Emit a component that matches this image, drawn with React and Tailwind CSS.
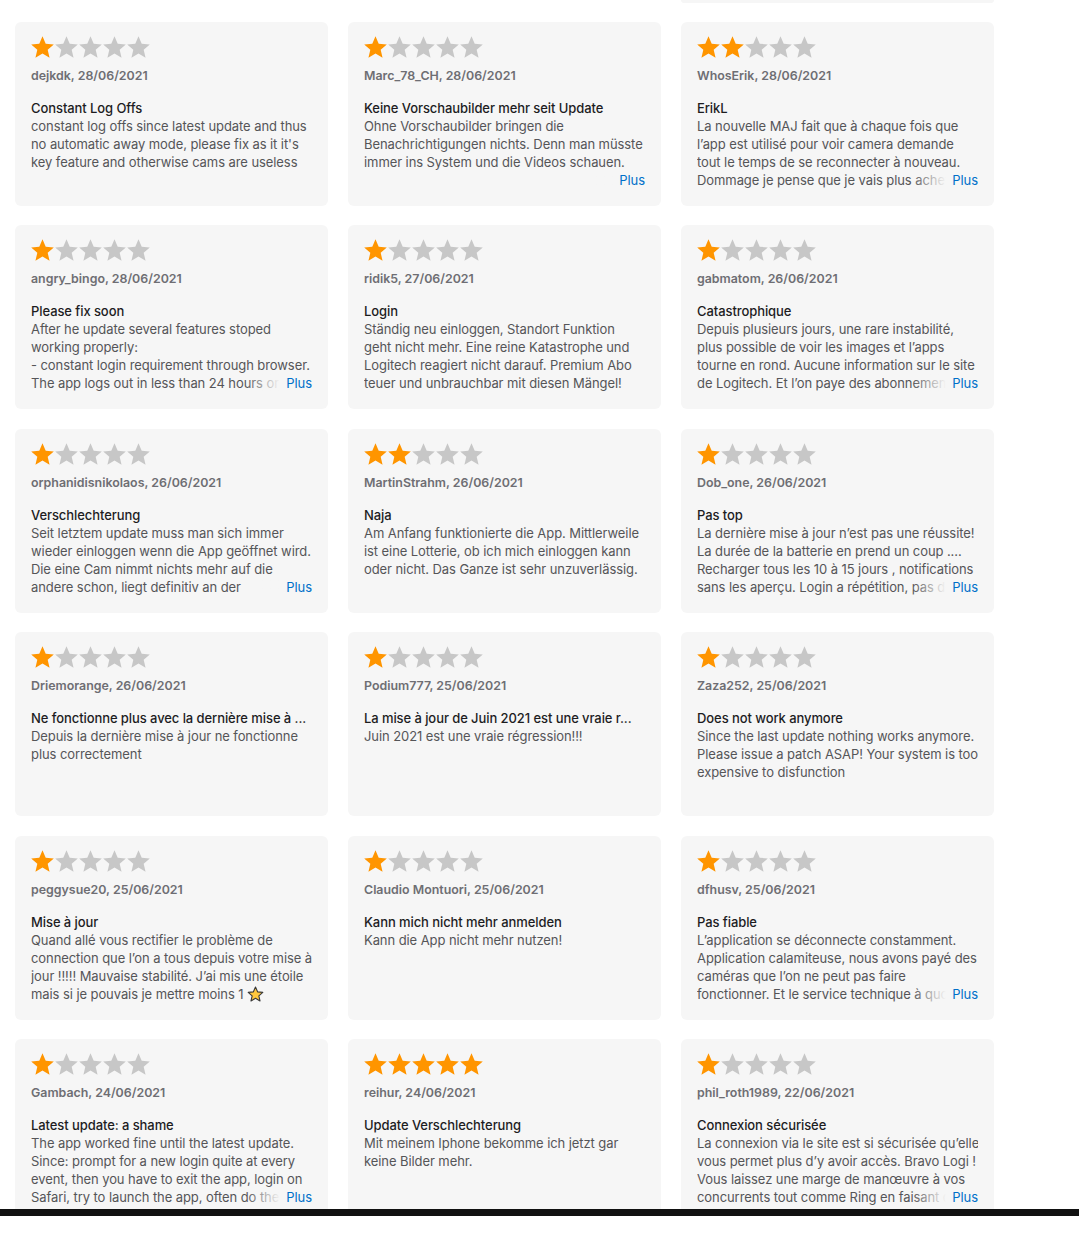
import React from "react";

const reviews = [
  { r: 1, name: "dejkdk, 28/06/2021", title: "Constant Log Offs", lines: ["constant log offs since latest update and thus", "no automatic away mode, please fix as it it's", "key feature and otherwise cams are useless"] },
  { r: 1, name: "Marc_78_CH, 28/06/2021", title: "Keine Vorschaubilder mehr seit Update", lines: ["Ohne Vorschaubilder bringen die", "Benachrichtigungen nichts. Denn man müsste", "immer ins System und die Videos schauen."], plus: true },
  { r: 2, name: "WhosErik, 28/06/2021", title: "ErikL", lines: ["La nouvelle MAJ fait que à chaque fois que", "l’app est utilisé pour voir camera demande", "tout le temps de se reconnecter à nouveau.", "Dommage je pense que je vais plus acheter de"], plus: true },
  { r: 1, name: "angry_bingo, 28/06/2021", title: "Please fix soon", lines: ["After he update several features stoped", "working properly:", "- constant login requirement through browser.", "The app logs out in less than 24 hours or after"], plus: true },
  { r: 1, name: "ridik5, 27/06/2021", title: "Login", lines: ["Ständig neu einloggen, Standort Funktion", "geht nicht mehr. Eine reine Katastrophe und", "Logitech reagiert nicht darauf. Premium Abo", "teuer und unbrauchbar mit diesen Mängel!"] },
  { r: 1, name: "gabmatom, 26/06/2021", title: "Catastrophique", lines: ["Depuis plusieurs jours, une rare instabilité,", "plus possible de voir les images et l’apps", "tourne en rond. Aucune information sur le site", "de Logitech. Et l’on paye des abonnements pour"], plus: true },
  { r: 1, name: "orphanidisnikolaos, 26/06/2021", title: "Verschlechterung", lines: ["Seit letztem update muss man sich immer", "wieder einloggen wenn die App geöffnet wird.", "Die eine Cam nimmt nichts mehr auf die", "andere schon, liegt definitiv an der"], plus: true },
  { r: 2, name: "MartinStrahm, 26/06/2021", title: "Naja", lines: ["Am Anfang funktionierte die App. Mittlerweile", "ist eine Lotterie, ob ich mich einloggen kann", "oder nicht. Das Ganze ist sehr unzuverlässig."] },
  { r: 1, name: "Dob_one, 26/06/2021", title: "Pas top", lines: ["La dernière mise à jour n’est pas une réussite!", "La durée de la batterie en prend un coup ....", "Recharger tous les 10 à 15 jours , notifications", "sans les aperçu. Login a répétition, pas de"], plus: true },
  { r: 1, name: "Driemorange, 26/06/2021", title: "Ne fonctionne plus avec la dernière mise à ...", lines: ["Depuis la dernière mise à jour ne fonctionne", "plus correctement"] },
  { r: 1, name: "Podium777, 25/06/2021", title: "La mise à jour de Juin 2021 est une vraie r...", lines: ["Juin 2021 est une vraie régression!!!"] },
  { r: 1, name: "Zaza252, 25/06/2021", title: "Does not work anymore", lines: ["Since the last update nothing works anymore.", "Please issue a patch ASAP! Your system is too", "expensive to disfunction"] },
  { r: 1, name: "peggysue20, 25/06/2021", title: "Mise à jour", lines: ["Quand allé vous rectifier le problème de", "connection que l’on a tous depuis votre mise à", "jour !!!!! Mauvaise stabilité. J’ai mis une étoile", "mais si je pouvais je mettre moins 1"], emoji: true },
  { r: 1, name: "Claudio Montuori, 25/06/2021", title: "Kann mich nicht mehr anmelden", lines: ["Kann die App nicht mehr nutzen!"] },
  { r: 1, name: "dfhusv, 25/06/2021", title: "Pas fiable", lines: ["L’application se déconnecte constamment.", "Application calamiteuse, nous avons payé des", "caméras que l’on ne peut pas faire", "fonctionner. Et le service technique à quoi sert"], plus: true },
  { r: 1, name: "Gambach, 24/06/2021", title: "Latest update: a shame", lines: ["The app worked fine until the latest update.", "Since: prompt for a new login quite at every", "event, then you have to exit the app, login on", "Safari, try to launch the app, often do the same"], plus: true },
  { r: 5, name: "reihur, 24/06/2021", title: "Update Verschlechterung", lines: ["Mit meinem Iphone bekomme ich jetzt gar", "keine Bilder mehr."] },
  { r: 1, name: "phil_roth1989, 22/06/2021", title: "Connexion sécurisée", lines: ["La connexion via le site est si sécurisée qu’elle", "vous permet plus d’y avoir accès. Bravo Logi !", "Vous laissez une marge de manœuvre à vos", "concurrents tout comme Ring en faisant de plus"], plus: true },
];

function Star({ on }) {
  return (
    <svg width="23" height="22" viewBox="1 0.6 22 21.2" className="shrink-0">
      <path
        d="M12 0.8l3.1 7.2 7.8 0.7-5.9 5.2 1.8 7.7L12 17.5l-6.8 4.1 1.8-7.7-5.9-5.2 7.8-0.7z"
        fill={on ? "#ff9500" : "#c7c7c7"}
      />
    </svg>
  );
}

function EmojiStar() {
  return (
    <svg width="17" height="16" viewBox="0 0 24 23" className="inline-block ml-[4px] -mt-[3px] align-middle">
      <path
        d="M12 1.5l3 6.9 7.5 0.7-5.7 5 1.7 7.4L12 17.6l-6.5 3.9 1.7-7.4-5.7-5 7.5-0.7z"
        fill="#ffc83d"
        stroke="#3a3a3a"
        strokeWidth="1.6"
        strokeLinejoin="round"
      />
    </svg>
  );
}

function Card({ d }) {
  return (
    <div className="h-[184px] rounded-[6px] bg-[#f6f6f6] pt-[14px] pl-[16px] pr-[16px] overflow-hidden tracking-[-0.08px]">
      <div className="flex gap-[1px] h-[22px]">
        {[0, 1, 2, 3, 4].map((i) => (
          <Star key={i} on={i < d.r} />
        ))}
      </div>
      <div className="mt-[9px] h-[18px] leading-[18px] text-[12.4px] tracking-normal font-semibold text-[#6e6e73] whitespace-nowrap">
        {d.name}
      </div>
      <div className="mt-[14px] h-[18px] leading-[18px] text-[13px] font-medium text-[#1d1d1f] whitespace-nowrap overflow-hidden">
        {d.title}
      </div>
      <div className="relative h-[72px] text-[13px] leading-[18px] text-[#555558]">
        {d.lines.map((l, i) => (
          <div key={i} className="whitespace-nowrap overflow-hidden">
            {l}
            {d.emoji && i === d.lines.length - 1 ? <EmojiStar /> : null}
          </div>
        ))}
        {d.plus ? (
          <div className="absolute right-0 bottom-0 flex h-[18px]">
            <div className="w-[34px] bg-gradient-to-r from-[#f6f6f6]/0 to-[#f6f6f6]" />
            <span className="bg-[#f6f6f6] pl-[6px] text-[#0070c9]">Plus</span>
          </div>
        ) : null}
      </div>
    </div>
  );
}

export default function App() {
  return (
    <div className="relative h-[1236px] w-[1079px] bg-white font-['Inter','Liberation_Sans',sans-serif] antialiased">
      <div className="h-[1209px] overflow-hidden pl-[15px]">
        <div className="grid grid-cols-[313px_313px_313px] gap-x-[20px] gap-y-[19.4px]">
          <div className="h-[2.6px]" />
          <div className="h-[2.6px]" />
          <div className="h-[2.6px] rounded-b-[3px] bg-[#f6f6f6]" />
          {reviews.map((d, i) => (
            <Card key={i} d={d} />
          ))}
        </div>
      </div>
      <div className="h-[7px] bg-[#111111]" />
    </div>
  );
}
